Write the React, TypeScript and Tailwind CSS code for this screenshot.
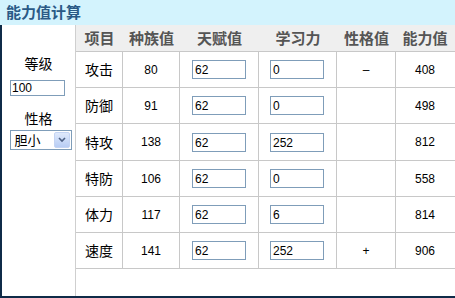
import React from "react";

const rows = [
  { n: "攻击", b: "80", iv: "62", ev: "0", nat: "–", v: "408" },
  { n: "防御", b: "91", iv: "62", ev: "0", nat: "", v: "498" },
  { n: "特攻", b: "138", iv: "62", ev: "252", nat: "", v: "812" },
  { n: "特防", b: "106", iv: "62", ev: "0", nat: "", v: "558" },
  { n: "体力", b: "117", iv: "62", ev: "6", nat: "", v: "814" },
  { n: "速度", b: "141", iv: "62", ev: "252", nat: "+", v: "906" },
];

const cjk = "font-['SimSun','Noto_Sans_CJK_SC',sans-serif]";
const num = "font-['Liberation_Sans',sans-serif] text-[12px]";

function Box({ value }: { value: string }) {
  return (
    <div className={`w-[54px] h-[19px] border border-[#7f9db9] bg-white pl-[2px] pt-[2px] leading-[14px] text-black ${num}`}>
      {value}
    </div>
  );
}

export default function App() {
  return (
    <div className="w-[455px] h-[298px] bg-white flex flex-col overflow-hidden">
      <div className="h-[25px] bg-[#d3f3fd] flex items-center pl-[6px]">
        <span className={`text-[15px] font-bold text-[#2a5a86] ${cjk}`}>能力值计算</span>
      </div>
      <div className="flex-1 flex border-l-2 border-b-2 border-[#0f2b48]">
        <div className="w-[74px] border-r border-[#cfcfcf] flex flex-col items-center">
          <div className={`mt-[30px] h-[16px] leading-[16px] text-[14px] text-black ${cjk}`}>等级</div>
          <div className={`mt-[9px] ml-[-2px] w-[55px] h-[16px] border border-[#7f9db9] pl-[1px] leading-[14px] text-black ${num}`}>100</div>
          <div className={`mt-[14px] h-[16px] leading-[16px] text-[14px] text-black ${cjk}`}>性格</div>
          <div className="mt-[4px] ml-[4px] w-[62px] h-[20px] border border-[#7f9db9] flex items-center">
            <span className={`flex-1 pl-[4px] text-[13px] leading-[16px] text-black ${cjk}`}>胆小</span>
            <span className="w-[16px] h-[16px] mr-[1px] bg-gradient-to-b from-[#dfe9fb] to-[#b8cdf4] border border-[#c4d4f3] rounded-[2px] flex items-center justify-center">
              <svg width="8" height="6" viewBox="0 0 8 6"><path d="M1 1 L4 4 L7 1" stroke="#4d6185" strokeWidth="1.6" fill="none" /></svg>
            </span>
          </div>
        </div>
        <div className="flex-1 flex flex-col">
          <div className={`grid grid-cols-[47px_57px_79px_78px_59px_58px] h-[27px] bg-[#efefef] border-b border-[#c8c8c8] text-[15px] font-bold text-[#555] ${cjk}`}>
            {["项目", "种族值", "天赋值", "学习力", "性格值", "能力值"].map((h) => (
              <div key={h} className="flex items-center justify-center">{h}</div>
            ))}
          </div>
          {rows.map((r, i) => (
            <div
              key={r.n}
              className={`grid grid-cols-[47px_57px_79px_78px_59px_58px] border-b border-[#c8c8c8] ${i === 2 ? "h-[37px]" : "h-[36px]"}`}
            >
              <div className={`flex items-center justify-center border-r border-[#c8c8c8] text-[14px] text-black ${cjk}`}>{r.n}</div>
              <div className={`flex items-center justify-center border-r border-[#c8c8c8] text-black ${num}`}>{r.b}</div>
              <div className="flex items-center pl-[12px] border-r border-[#c8c8c8]"><Box value={r.iv} /></div>
              <div className="flex items-center pl-[11px] border-r border-[#c8c8c8]"><Box value={r.ev} /></div>
              <div className={`flex items-center justify-center border-r border-[#c8c8c8] text-black ${num}`}>{r.nat}</div>
              <div className={`flex items-center justify-center text-black ${num}`}>{r.v}</div>
            </div>
          ))}
        </div>
      </div>
    </div>
  );
}
